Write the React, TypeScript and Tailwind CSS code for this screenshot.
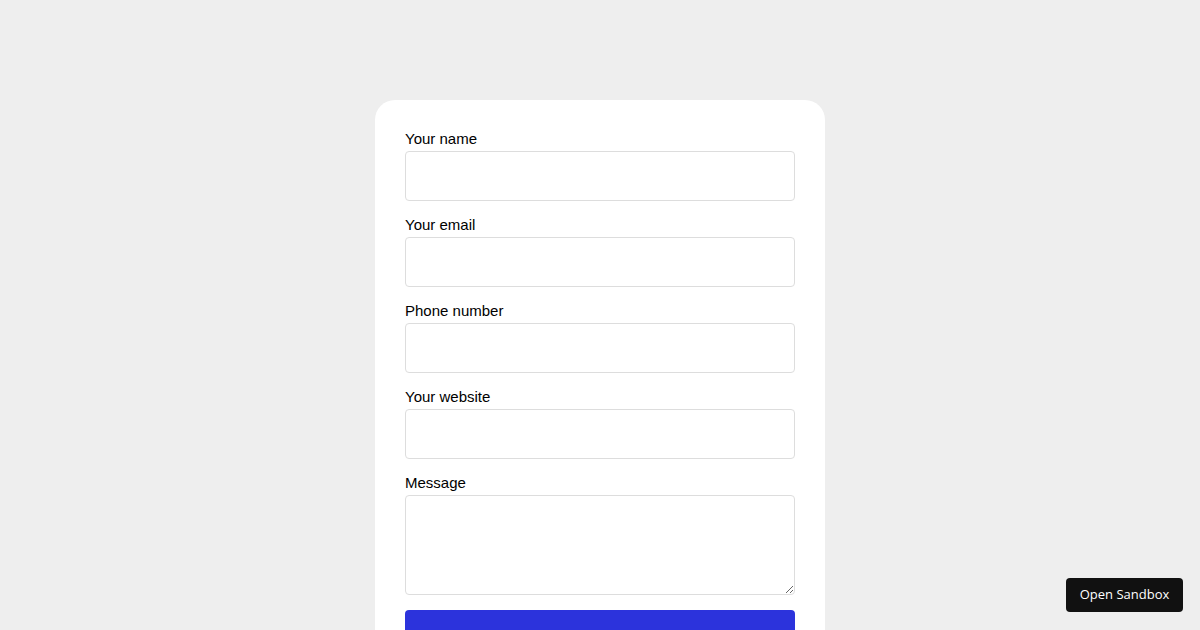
import React from "react";

const fields = ["Your name", "Your email", "Phone number", "Your website"];

export default function App() {
  return (
    <div className="relative w-[1200px] h-[630px] overflow-hidden bg-[#eeeeee]" style={{ fontFamily: '"Liberation Sans", Arial, sans-serif' }}>
      <div className="flex justify-center pt-[100px]">
        <form className="w-[450px] bg-white rounded-[20px] p-[30px]">
          {fields.map((f) => (
            <div key={f} className="mb-[15px]">
              <label className="block text-[15px] leading-[18px] text-black mb-[3px]">{f}</label>
              <input className="block w-full h-[50px] border border-[#dddddd] rounded-[4px] bg-white outline-none" />
            </div>
          ))}
          <div className="mb-[15px]">
            <label className="block text-[15px] leading-[18px] text-black mb-[3px]">Message</label>
            <textarea className="block w-full h-[100px] border border-[#dddddd] rounded-[4px] bg-white outline-none" />
          </div>
          <button type="button" className="block w-full h-[50px] rounded-[4px] bg-[#2c33dc]" />
        </form>
      </div>
      <div
        className="absolute left-[1066px] top-[578px] w-[117px] h-[34px] rounded-[4px] bg-[#111111] text-white text-[13px] font-medium flex items-center justify-center"
        style={{ fontFamily: '"Open Sans", "Noto Sans", sans-serif' }}
      >
        Open Sandbox
      </div>
    </div>
  );
}
